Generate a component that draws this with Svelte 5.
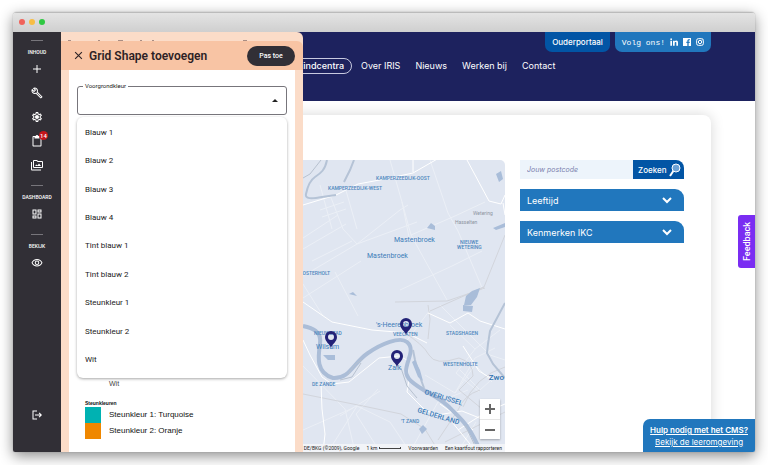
<script lang="ts">
	type Item = { label: string; icon: string; badge?: number };

	const sections: { title: string; items: Item[] }[] = [
		{
			title: 'INHOUD',
			items: [
				{ label: 'Toevoegen', icon: 'M20 13h-7v7h-2v-7H4v-2h7V4h2v7h7v2z' },
				{
					label: 'Beheer',
					icon: 'M22.61 18.99l-9.08-9.08c.93-2.34.45-5.1-1.44-7C9.79.61 6.21.4 3.66 2.26L7.5 6.11 6.08 7.52 2.25 3.69C.39 6.23.6 9.82 2.9 12.11c1.86 1.86 4.57 2.35 6.89 1.48l9.11 9.11c.39.39 1.02.39 1.41 0l2.3-2.3c.4-.38.4-1.01 0-1.41zm-3 1.6l-9.46-9.46c-.61.45-1.29.72-2 .82-1.36.2-2.79-.21-3.83-1.25C3.37 9.76 2.93 8.5 3 7.26l3.09 3.09 4.24-4.24-3.09-3.09c1.24-.07 2.49.37 3.44 1.31 1.08 1.08 1.49 2.57 1.24 3.96-.12.71-.42 1.37-.88 1.96l9.45 9.45-.88.89z'
				},
				{
					label: 'Instellingen',
					icon: 'M19.43 12.98c.04-.32.07-.64.07-.98 0-.34-.03-.66-.07-.98l2.11-1.65c.19-.15.24-.42.12-.64l-2-3.46c-.09-.16-.26-.25-.44-.25-.06 0-.12.01-.17.03l-2.49 1c-.52-.4-1.08-.73-1.69-.98l-.38-2.65C14.46 2.18 14.25 2 14 2h-4c-.25 0-.46.18-.49.42l-.38 2.65c-.61.25-1.17.59-1.69.98l-2.49-1c-.06-.02-.12-.03-.18-.03-.17 0-.34.09-.43.25l-2 3.46c-.13.22-.07.49.12.64l2.11 1.65c-.04.32-.07.65-.07.98 0 .33.03.66.07.98l-2.11 1.65c-.19.15-.24.42-.12.64l2 3.46c.09.16.26.25.44.25.06 0 .12-.01.17-.03l2.49-1c.52.4 1.08.73 1.69.98l.38 2.65c.03.24.24.42.49.42h4c.25 0 .46-.18.49-.42l.38-2.65c.61-.25 1.17-.59 1.69-.98l2.49 1c.06.02.12.03.18.03.17 0 .34-.09.43-.25l2-3.46c.12-.22.07-.49-.12-.64l-2.11-1.65zm-1.98-1.71c.04.31.05.52.05.73 0 .21-.02.43-.05.73l-.14 1.13.89.7 1.08.84-.7 1.21-1.27-.51-1.04-.42-.9.68c-.43.32-.84.56-1.25.73l-1.06.43-.16 1.13-.2 1.35h-1.4l-.19-1.35-.16-1.13-1.06-.43c-.43-.18-.83-.41-1.23-.71l-.91-.7-1.06.43-1.27.51-.7-1.21 1.08-.84.89-.7-.14-1.13c-.03-.31-.05-.54-.05-.74s.02-.43.05-.73l.14-1.13-.89-.7-1.08-.84.7-1.21 1.27.51 1.04.42.9-.68c.43-.32.84-.56 1.25-.73l1.06-.43.16-1.13.2-1.35h1.39l.19 1.35.16 1.13 1.06.43c.43.18.83.41 1.23.71l.91.7 1.06-.43 1.27-.51.7 1.21-1.07.85-.89.7.14 1.13zM12 8c-2.21 0-4 1.79-4 4s1.79 4 4 4 4-1.79 4-4-1.79-4-4-4z'
				},
				{
					label: 'Taken',
					icon: 'M19 2h-4.18C14.4.84 13.3 0 12 0S9.600.84 9.180 2H5c-1.100 0-2 .9-2 2v17c0 1.100.9 2 2 2h14c1.100 0 2-.9 2-2V4c0-1.100-.9-2-2-2zm0 19H5V4h2v3h10V4h2v17z',
					badge: 14
				},
				{
					label: 'Bestanden',
					icon: 'M2 6H0v15a2 2 0 0 0 2 2h18v-2H2V6zM22 4h-8l-2-2H6a2 2 0 0 0-2 2v12a2 2 0 0 0 2 2h16a2 2 0 0 0 2-2V6a2 2 0 0 0-2-2zm0 12H6V4h5.2l2 2H22v10zM8 14h12l-4-5-3 4-2-2z'
				}
			]
		},
		{
			title: 'DASHBOARD',
			items: [
				{
					label: 'Dashboard',
					icon: 'M19 5v2h-4V5h4M9 5v6H5V5h4m10 8v6h-4v-6h4M9 17v2H5v-2h4M21 3h-8v6h8V3zM11 3H3v10h8V3zm10 8h-8v10h8V11zm-10 4H3v6h8v-6z'
				}
			]
		},
		{
			title: 'BEKIJK',
			items: [
				{
					label: 'Bekijk pagina',
					icon: 'M12 6c3.79 0 7.17 2.13 8.82 5.5C19.17 14.87 15.79 17 12 17s-7.17-2.13-8.82-5.5C4.83 8.13 8.21 6 12 6m0-2C7 4 2.73 7.11 1 11.5 2.73 15.89 7 19 12 19s9.27-3.11 11-7.5C21.27 7.11 17 4 12 4zm0 3a4.5 4.5 0 1 0 0 9 4.5 4.5 0 0 0 0-9zm0 2a2.5 2.5 0 1 1 0 5 2.5 2.5 0 0 1 0-5z'
				}
			]
		}
	];

	const colors = [
		'Blauw 1',
		'Blauw 2',
		'Blauw 3',
		'Blauw 4',
		'Tint blauw 1',
		'Tint blauw 2',
		'Steunkleur 1',
		'Steunkleur 2',
		'Wit'
	];

	const nav = ['Kindcentra', 'Over IRIS', 'Nieuws', 'Werken bij', 'Contact'];
	const filters = ['Leeftijd', 'Kenmerken IKC'];

	const districts = [
		{ x: 376, y: 180, text: 'KAMPERZEEDIJK-OOST' },
		{ x: 328, y: 190, text: 'KAMPERZEEDIJK-WEST' },
		{ x: 460, y: 244, text: 'NIEUWE' },
		{ x: 457, y: 249, text: 'WETERING' },
		{ x: 299, y: 275, text: 'OOSTERHOLT' },
		{ x: 314, y: 335, text: 'NIEUWSTAD' },
		{ x: 393, y: 336, text: 'VEECATEN' },
		{ x: 446, y: 335, text: 'STADSHAGEN' },
		{ x: 443, y: 366, text: 'WESTENHOLTE' },
		{ x: 312, y: 386, text: 'DE ZANDE' },
		{ x: 401, y: 423, text: "'T ZAND" }
	];

	const places = [
		{ x: 394, y: 242, text: 'Mastenbroek' },
		{ x: 367, y: 258, text: 'Mastenbroek' },
		{ x: 376, y: 327, text: "'s-Heerenbroek" },
		{ x: 316, y: 349, text: 'Wilsum' },
		{ x: 388, y: 370, text: 'Zalk' }
	];

	const pins = [
		{ x: 331, y: 348 },
		{ x: 406, y: 335 },
		{ x: 397, y: 367 }
	];

	let color = $state('');
	let postcode = $state('');
</script>

<div class="desktop">
	<div class="window">
		<div class="titlebar">
			<span class="light light--close"></span>
			<span class="light light--min"></span>
			<span class="light light--max"></span>
		</div>

		<div class="screen">
			<aside class="sidebar">
				{#each sections as section (section.title)}
					<div class="group">
						<h2 class="group__title">{section.title}</h2>
						{#each section.items as item (item.label)}
							<button class="tool" aria-label={item.label}>
								<svg viewBox="0 0 24 24" aria-hidden="true"><path d={item.icon} /></svg>
								{#if item.badge}<span class="tool__badge">{item.badge}</span>{/if}
							</button>
						{/each}
					</div>
				{/each}
				<button class="tool tool--logout" aria-label="Uitloggen">
					<svg viewBox="0 0 24 24" aria-hidden="true">
						<path d="M17 7l-1.5 1.5L18 11H8v2h10l-2.5 2.5L17 17l5-5-5-5zM5 5h7V3H3v18h9v-2H5V5z" />
					</svg>
				</button>
			</aside>

			<div class="site">
				<header class="site-header">
					<div class="topbar">
						<a class="tab tab--portal" href="#ouderportaal">Ouderportaal</a>
						<div class="tab tab--social">
							<span class="follow">Volg ons!</span>
							<a href="#linkedin" aria-label="LinkedIn">
								<svg viewBox="0 0 24 24" aria-hidden="true">
									<path d="M1 8h5v15H1zM3.5 1a2.6 2.6 0 1 1 0 5.2 2.6 2.6 0 0 1 0-5.2zM9 8h5v2.2C15 8.5 16.5 7.6 18.6 7.6 22.5 7.6 24 10 24 14v9h-5v-8c0-2-.5-3.2-2.2-3.2S14 13 14 15v8H9z" />
								</svg>
							</a>
							<a href="#facebook" aria-label="Facebook">
								<svg viewBox="0 0 24 24" aria-hidden="true">
									<path d="M0 0h24v24h-7v-9h3l.5-4H17V9c0-1.200.5-2 2-2h2V3.500h-3c-3.500 0-5 2-5 5V11h-3v4h3v9H0z" />
								</svg>
							</a>
							<a href="#instagram" aria-label="Instagram">
								<svg viewBox="0 0 24 24" aria-hidden="true">
									<rect class="line" x="2" y="2" width="20" height="20" rx="5" />
									<circle class="line" cx="12" cy="12" r="5" />
									<circle cx="18" cy="6" r="1.5" />
								</svg>
							</a>
						</div>
					</div>
					<nav class="nav">
						{#each nav as link, i (link)}
							<a class="nav__link" class:nav__link--active={i === 0} href="#{i}">{link}</a>
						{/each}
					</nav>
				</header>

				<main class="card">
					<div class="map">
						<svg class="map__canvas" viewBox="132 160 373 292" preserveAspectRatio="xMaxYMid slice" role="img" aria-label="Kaart">
							<rect class="land" x="132" y="160" width="373" height="292" />

							<g class="minor">
								<path d="M330 195l13 34 14 15M345 187l12 42M303 238l35-23M303 249l43-25M312 261l40-20M320 185l12 44M303 276l54-32 43-34 8-5M357 244l60-22M303 298l58-37M335 272l23 44M303 284l20 32M320 210l24-8M322 217l24-8" />
								<path d="M390 160l12 42 8 40M430 160l18 53 10 18 25 59M402 202l9 33 11 20 25 45M411 235l44-19M455 216l30-14M400 290l52-24 30-15M303 366l42 43 10 43M328 452l29-46 33 16 20 30M340 416l40-25M380 452l-24-38 22-25M303 430l50-22M410 452l28-50 30-12M458 452l18-30M430 310l-25 33M440 305l50 50 15 5M450 325l25 24 25-19" />
								<path d="M425 375l30 18 20-28M460 370l20 20 20-18M470 360l22 22M455 393l20-35 20-10M476 348l-20 25 23 19" />
							</g>

							<g class="muted">
								<path d="M303 394l60 12 38 8 24 15 14 23M403 332q20 12 26 23t30 3q14 4 14 18l-14 14 34 28M428 305l2 14-2 20" />
								<path d="M505 235l-21 52-54 24M484 287l-18 8M445 442l60-30M395 302l52-1 38-13M480 390q-16 5-22 20l-20 30M505 367q-30 9-42 40" />
							</g>

							<g class="road">
								<path d="M303 205l33-10 22-11 27-5 28-6 26-15M413 160v12M467 160l22 41 12 3 4-9M503 203l2 12" />
								<path d="M303 302l29 20 40 8 35 3 20 10M303 340l7 15 12 22 10 7 17-2 15-12 15-12 20-2 8 4 2 20-2 12 18 18 12 5 25-4 35 14" />
								<path d="M321 384l1 25 3 25-2 18M428 313l22 10 18-10 12 8 25 8M463 346l16 25 13 8M440 404l18 13 15 13M458 430l28-18 19-8M452 422l18 22" />
							</g>

							<g class="water">
								<path class="river" d="M303 326c9 2 19 5 17 18s-4 29 13 34c17 1 20-15 35-25 13-9 32-17 39-11 12 10-10 27 4 39 13 12 29 15 42 30 15 14 19 22 27 39" />
								<path class="stream" d="M327 160c-2 10-6 13-12 17s-8 12-9 17 5 5 16 3l14-2M354 160l-4 10-6 12M505 303l-8 15-7 13-2 13-1 9 6 11 12 14M413 350l2 10 4 14 5 14" />
								<path class="creek" d="M348 375c5-9 8-12 14-15M340 380l12-3 9-14M465 425l13 27M401 368l6 18 10 12M321 160l-11 14-7 4" />
								<path d="M464 305l2-9 6-5 8-3-3 9-6 8zM427 228l4-5 4 3v4zM493 228l12-5v4l-9 3zM349 294l4-2 4 4zM323 355h12v5h-7zM463 305l10 1-1 6-9-1zM419 429l4-4 4 4-5 5zM412 362l3-2 5 10 3 11-5-4zM496 174l5-3 2 8-4 3z" />
							</g>

							<g class="district">
								{#each districts as d (d.text)}
									<text x={d.x} y={d.y}>{d.text}</text>
								{/each}
							</g>
							<g class="hamlet">
								<text x="473" y="215">Wetering</text>
								<text x="455" y="224">Hasselten</text>
							</g>
							<g class="place">
								{#each places as p, i (i)}
									<text x={p.x} y={p.y}>{p.text}</text>
								{/each}
							</g>
							<text class="town" x="504" y="380">Zwo</text>
							<text class="province" transform="translate(424 394) rotate(17)">OVERIJSSEL</text>
							<text class="province" transform="translate(417 412) rotate(17)">GELDERLAND</text>

							{#each pins as pin, i (i)}
								<path
									class="pin"
									transform="translate({pin.x} {pin.y})"
									d="M0 0C-1-4-6-6-6-11a6 6 0 0 1 12 0C6-6 1-4 0 0zM0-14a3 3 0 1 0 0 6 3 3 0 0 0 0-6z"
								/>
							{/each}
						</svg>

						<div class="zoom">
							<button aria-label="Inzoomen"><svg viewBox="0 0 10 10" aria-hidden="true"><path d="M0 4h4V0h2v4h4v2H6v4H4V6H0z" /></svg></button>
							<button aria-label="Uitzoomen"><svg viewBox="0 0 10 10" aria-hidden="true"><path d="M0 4h10v2H0z" /></svg></button>
						</div>
						<div class="credits">
							<span>DE/BKG (©2009), Google</span>
							<span class="scale">1 km <i></i></span>
							<a href="#voorwaarden">Voorwaarden</a>
							<a href="#kaartfout">Een kaartfout rapporteren</a>
						</div>
					</div>

					<div class="filters">
						<form class="search">
							<input aria-label="Jouw postcode" placeholder="Jouw postcode" bind:value={postcode} />
							<button type="button">
								Zoeken
								<svg viewBox="0 0 12 14" aria-hidden="true">
									<path class="handle" d="M1 13l4-6" />
									<circle cx="7" cy="5" r="4" />
								</svg>
							</button>
						</form>
						{#each filters as filter (filter)}
							<button class="filter">
								{filter}
								<svg viewBox="0 0 12 8" aria-hidden="true"><path d="M2 2l4 4 4-4" /></svg>
							</button>
						{/each}
					</div>
				</main>
			</div>

			<section class="panel">
				<svg class="panel__peek" viewBox="0 0 242 9" aria-hidden="true">
					<path d="M7 8h3v1H7zM37 8h2v1h-2zM57 8h5v1h-5zM79 8h2v1h-2zM91 8h2v1h-2zM182 8h4v1h-4z" />
				</svg>
				<header class="panel__header">
					<button class="close" aria-label="Sluiten">
						<svg viewBox="0 0 8 8" aria-hidden="true"><path d="M1 1l6 6M7 1L1 7" /></svg>
					</button>
					<h1>Grid Shape toevoegen</h1>
					<button class="apply">Pas toe</button>
				</header>
				<div class="panel__body">
					<div class="field">
						<label for="foreground">Voorgrondkleur</label>
						<select id="foreground" bind:value={color}>
							<option value=""></option>
							{#each colors as c (c)}
								<option>{c}</option>
							{/each}
						</select>
						<svg class="field__arrow" viewBox="0 0 6 3" aria-hidden="true"><path d="M0 3l3-3 3 3z" /></svg>
						<ul class="menu">
							{#each colors as c (c)}
								<li><button onclick={() => (color = c)}>{c}</button></li>
							{/each}
						</ul>
					</div>
					<div class="legend">
						<p class="legend__white">Wit</p>
						<h3>Steunkleuren</h3>
						<div class="swatch swatch--turquoise">Steunkleur 1: Turquoise</div>
						<div class="swatch swatch--orange">Steunkleur 2: Oranje</div>
					</div>
				</div>
			</section>

			<button class="feedback">Feedback</button>
			<div class="help">
				<a class="help__title" href="#hulp">Hulp nodig met het CMS?</a>
				<a href="#leeromgeving">Bekijk de leeromgeving</a>
			</div>
		</div>
	</div>
</div>

<style>
	:global(body) {
		margin: 0;
		background: #fff;
	}

	.desktop {
		display: flex;
		box-sizing: border-box;
		min-height: 100vh;
		padding: 12px 13px 13px;
		font-family: Inter, 'Open Sans', sans-serif;
		font-size: 9px;
	}

	button,
	input,
	select {
		box-sizing: border-box;
		margin: 0;
		padding: 0;
		border: 0;
		border-radius: 0;
		background: none;
		color: inherit;
		font: inherit;
	}

	a {
		color: inherit;
		text-decoration: none;
	}

	svg {
		display: block;
		fill: currentColor;
	}

	h1,
	h2,
	h3,
	p {
		margin: 0;
	}

	.window {
		flex: 1;
		display: flex;
		flex-direction: column;
		border-radius: 4px 4px 2px 2px;
		overflow: hidden;
		background: #fff;
		box-shadow:
			0 0 1px #777,
			0 4px 14px rgba(0, 0, 0, 0.45);
	}

	.titlebar {
		display: flex;
		align-items: center;
		gap: 4px;
		height: 20px;
		padding-left: 6px;
		background: linear-gradient(#e5e5e5, #cfcfcf);
		box-shadow: inset 0 1px #bbb;
	}

	.light {
		width: 6px;
		height: 6px;
		border-radius: 50%;
	}

	.light--close {
		background: #f0625a;
	}

	.light--min {
		background: #f8bd45;
	}

	.light--max {
		background: #2fc842;
	}

	.screen {
		flex: 1;
		position: relative;
		display: grid;
		grid-template-columns: 48px 242px 1fr;
	}

	.sidebar {
		grid-area: 1 / 1;
		display: flex;
		flex-direction: column;
		padding-bottom: 25px;
		background: #312f36;
		color: #fff;
		font-family: Roboto, sans-serif;
	}

	.group {
		display: flex;
		flex-direction: column;
		align-items: center;
		padding-top: 8px;
	}

	.group::before {
		content: '';
		width: 12px;
		height: 1px;
		margin-bottom: 7px;
		background: #77757b;
	}

	.group__title {
		margin-bottom: 1px;
		font-size: 5px;
		line-height: 8px;
		font-weight: 500;
	}

	.tool {
		position: relative;
		display: grid;
		place-items: center;
		width: 24px;
		height: 24px;
	}

	.tool svg {
		width: 12px;
		height: 12px;
	}

	.tool--logout {
		align-self: center;
		margin-top: auto;
	}

	.tool__badge {
		position: absolute;
		top: 2px;
		right: 1px;
		min-width: 9px;
		border-radius: 5px;
		background: #c4161c;
		font-size: 6px;
		line-height: 9px;
		font-weight: 500;
		text-align: center;
	}

	.panel {
		grid-area: 1 / 2;
		position: relative;
		display: flex;
		flex-direction: column;
		border-radius: 0 6px 0 0;
		background: #fbdcc8;
		color: #222;
		font-family: Roboto, sans-serif;
	}

	.panel__peek {
		width: 100%;
		height: 9px;
		fill: #a98d83;
	}

	.panel__header {
		display: flex;
		align-items: center;
		height: 29px;
		padding: 0 8px 0 13px;
		border-radius: 0 6px 0 0;
		background: #f8c4a4;
	}

	.close {
		width: 9px;
		height: 9px;
	}

	.close svg {
		fill: none;
		stroke: #2d2326;
	}

	h1 {
		margin-left: 6px;
		color: #2d1f25;
		font-size: 12px;
		line-height: 16px;
		font-weight: 600;
	}

	.apply {
		width: 48px;
		height: 20px;
		margin-left: auto;
		border-radius: 10px;
		background: #312f36;
		color: #fff;
		font-size: 7px;
		font-weight: 500;
	}

	.panel__body {
		flex: 1;
		display: flex;
		flex-direction: column;
		margin: 0 8px;
		padding: 16px 8px 13px;
		background: #fff;
	}

	.field {
		position: relative;
	}

	.field label {
		position: absolute;
		top: -4px;
		left: 6px;
		padding: 0 2px;
		background: #fff;
		font-size: 6px;
		line-height: 8px;
	}

	.field select {
		display: block;
		width: 100%;
		height: 29px;
		padding: 0 8px;
		border: 1px solid #77757b;
		border-radius: 3px;
		appearance: none;
	}

	.field__arrow {
		position: absolute;
		top: 13px;
		right: 9px;
		width: 6px;
		height: 3px;
	}

	.menu {
		position: absolute;
		top: 31px;
		left: 0;
		right: 0;
		z-index: 1;
		box-sizing: border-box;
		display: grid;
		grid-auto-rows: 1fr;
		height: 261px;
		margin: 0;
		padding: 1px 0 4px;
		list-style: none;
		border-radius: 6px;
		background: #fff;
		box-shadow: 0 1px 3px rgba(0, 0, 0, 0.35);
	}

	.menu li {
		display: grid;
	}

	.menu button {
		padding: 0 8px;
		text-align: left;
		font-size: 8px;
	}

	.legend {
		margin-top: auto;
		padding-left: 8px;
		color: #111;
		font-family: 'Liberation Sans', Arial, sans-serif;
		font-size: 8px;
	}

	.legend__white {
		margin-bottom: 11px;
		padding-left: 24px;
		color: #444;
		font-size: 7px;
		line-height: 10px;
	}

	.legend h3 {
		font-size: 5px;
		line-height: 7px;
	}

	.swatch {
		padding-left: 8px;
		border-left: 16px solid;
		line-height: 16px;
	}

	.swatch--turquoise {
		border-color: #00b2b2;
	}

	.swatch--orange {
		border-color: #ef8700;
	}

	.site {
		grid-area: 1 / 2 / 2 / 4;
		display: flex;
		flex-direction: column;
		min-width: 0;
		overflow: hidden;
	}

	.site-header {
		height: 69px;
		background: #1d225e;
		color: #fff;
	}

	.topbar {
		display: flex;
		justify-content: flex-end;
		gap: 5px;
		padding-right: 44px;
	}

	.tab {
		display: flex;
		align-items: center;
		gap: 5px;
		height: 20px;
		padding: 0 7px;
		border-radius: 0 0 7px 7px;
	}

	.tab--portal {
		background: #0255a5;
		font-size: 8px;
		font-weight: 500;
	}

	.tab--social {
		background: #2177bd;
	}

	.tab--social svg {
		width: 8px;
		height: 8px;
	}

	.line {
		fill: none;
		stroke: #fff;
		stroke-width: 3;
	}

	.follow {
		font-family: 'Liberation Mono', monospace;
		font-size: 8px;
	}

	.nav {
		display: flex;
		gap: 15px;
		padding: 6px 0 0 228px;
		line-height: 14px;
	}

	.nav__link {
		padding: 1px 0;
		white-space: nowrap;
	}

	.nav__link--active {
		margin-right: -6px;
		padding: 0 7px;
		border: 1px solid #c8cae0;
		border-radius: 8px;
		font-weight: 500;
	}

	.card {
		flex: 1;
		display: grid;
		grid-template-columns: minmax(0, 1fr) 164px;
		gap: 15px;
		margin: 14px 44px 0;
		padding: 45px 27px 0;
		border-radius: 8px 8px 0 0;
		background: #fff;
		box-shadow: 0 0 14px rgba(0, 0, 0, 0.16);
	}

	.map {
		position: relative;
		border-radius: 0 5px 0 0;
		overflow: hidden;
	}

	.map__canvas {
		position: absolute;
		inset: 0;
		width: 100%;
		height: 100%;
		font-family: Roboto, sans-serif;
	}

	.land {
		fill: #e0e6f1;
	}

	.minor,
	.muted,
	.road {
		fill: none;
		stroke: #ebeff6;
	}

	.muted {
		stroke: #d2d5dc;
	}

	.road {
		stroke: #fff;
		stroke-linejoin: round;
	}

	.water {
		fill: #a9bdd9;
	}

	.river,
	.stream,
	.creek {
		fill: none;
		stroke: #abbdd7;
		stroke-width: 4;
	}

	.stream {
		stroke: #b5c3d6;
		stroke-width: 2;
	}

	.creek {
		stroke: #b7c1cf;
		stroke-width: 1;
	}

	.district {
		fill: #4c86bd;
		font-size: 5px;
		font-weight: 500;
	}

	.hamlet {
		fill: #8d949f;
		font-size: 5px;
	}

	.place {
		fill: #3c7cb8;
		font-size: 7px;
	}

	.town {
		fill: #2f72b0;
		font-size: 8px;
		font-weight: 500;
		text-anchor: end;
	}

	.province {
		fill: #3c7cb8;
		font-size: 7px;
		font-weight: 500;
	}

	.pin {
		fill: #232277;
		fill-rule: evenodd;
	}

	.zoom {
		position: absolute;
		right: 5px;
		bottom: 13px;
		display: grid;
		width: 20px;
		background: #fff;
		color: #666;
		box-shadow: 0 1px 2px rgba(0, 0, 0, 0.3);
	}

	.zoom button {
		display: grid;
		place-items: center;
		height: 20px;
	}

	.zoom button + button {
		border-top: 1px solid #e6e6e6;
	}

	.zoom svg {
		width: 10px;
		height: 10px;
	}

	.credits {
		position: absolute;
		right: 0;
		bottom: 0;
		display: flex;
		gap: 7px;
		padding: 0 3px;
		background: rgba(245, 246, 249, 0.85);
		color: #222;
		font-family: Roboto, sans-serif;
		font-size: 5px;
		line-height: 8px;
		white-space: nowrap;
	}

	.scale {
		display: flex;
		align-items: center;
		gap: 2px;
	}

	.scale i {
		width: 22px;
		height: 2px;
		border: 1px solid #444;
		border-top: 0;
		box-sizing: border-box;
	}

	.filters {
		display: flex;
		flex-direction: column;
		gap: 10px;
	}

	.search {
		display: flex;
		height: 19px;
	}

	.search input {
		flex: 1;
		min-width: 0;
		padding: 0 7px;
		background: #edf4fb;
		font-size: 7px;
		font-style: italic;
	}

	.search input::placeholder {
		color: #7a80ad;
	}

	.search button {
		display: flex;
		align-items: center;
		justify-content: space-between;
		width: 51px;
		padding: 0 3px 0 5px;
		border-radius: 0 8px 0 0;
		background: #0255a5;
		color: #fff;
		font-size: 8px;
		font-weight: 500;
	}

	.search svg {
		flex: none;
		width: 12px;
		height: 14px;
		fill: #6fa3d6;
		stroke: #fff;
	}

	.handle {
		stroke-width: 2;
	}

	.filter {
		display: flex;
		align-items: center;
		justify-content: space-between;
		height: 22px;
		padding: 0 11px 0 7px;
		border-radius: 0 9px 0 0;
		background: #2177bd;
		color: #fff;
	}

	.filter svg {
		width: 12px;
		height: 8px;
		fill: none;
		stroke: #fff;
		stroke-width: 2;
	}

	.feedback {
		position: absolute;
		top: 183px;
		right: 0;
		width: 17px;
		height: 53px;
		border-radius: 0 3px 3px 0;
		background: #7a2df2;
		color: #fff;
		font-family: Roboto, sans-serif;
		font-weight: 500;
		writing-mode: vertical-rl;
		transform: rotate(180deg);
	}

	.help {
		position: absolute;
		right: 0;
		bottom: 0;
		padding: 5px 7px 4px;
		border-radius: 7px 0 0;
		background: #2177bd;
		color: #fff;
		font-size: 8px;
		line-height: 12px;
		text-align: center;
	}

	.help a {
		display: block;
		text-decoration: underline;
	}

	.help__title {
		font-weight: 600;
	}
</style>
